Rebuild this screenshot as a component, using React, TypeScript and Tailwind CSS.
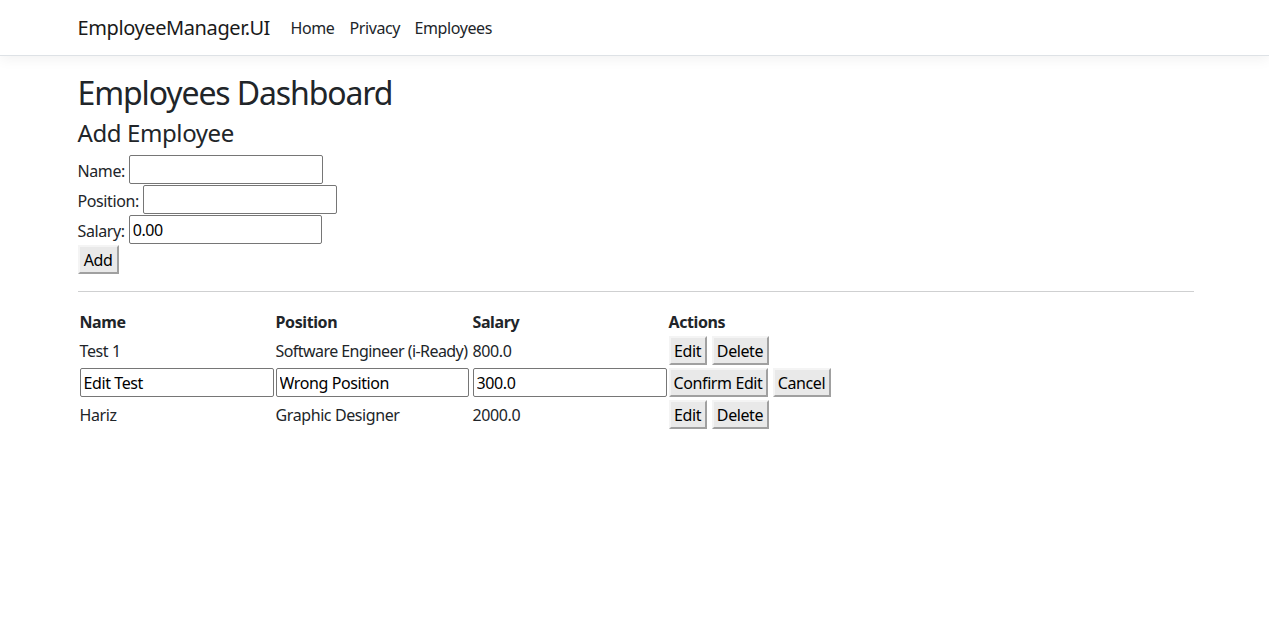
import React from "react";

const btn =
  "h-[29px] border-2 border-t-[#f4f4f4] border-l-[#f4f4f4] border-b-[#a0a0a0] border-r-[#a0a0a0] bg-[#e9e9e9] text-[16px] leading-none text-black whitespace-nowrap flex items-center justify-center";
const inp =
  "h-[29px] border border-[#767676] rounded-[2px] px-[3px] text-[16px] text-black bg-white outline-none tracking-[-0.025em]";

export default function App() {
  return (
    <div className="min-h-screen bg-white text-[#212529] font-['Noto_Sans',sans-serif] text-[16px] leading-[1.5] tracking-[-0.025em]">
      <header className="h-[56px] border-b border-[#dee2e6] bg-white shadow-[0_4px_12px_rgba(0,0,0,0.05)] pl-[2px]">
        <div className="mx-auto w-[1116px] h-full flex items-center">
          <div className="w-[213px] text-[20px] text-[#1a1a1a]">EmployeeManager.UI</div>
          <div className="w-[59px] text-[#212529]">Home</div>
          <div className="w-[65px] text-[#212529]">Privacy</div>
          <div className="text-[#212529]">Employees</div>
        </div>
      </header>
      <div className="pl-[2px]">
        <main className="mx-auto w-[1116px] pt-[17.5px]">
          <h1 className="text-[32px] leading-[38.4px] font-normal mb-[7px] tracking-[-0.035em]">Employees Dashboard</h1>
          <h4 className="text-[24px] leading-[28.8px] font-normal mb-[7.5px]">Add Employee</h4>
          <div className="flex flex-col">
            <div className="h-[30px] flex items-start gap-[4px]">
              <label className="pt-[2px] leading-[29px]">Name:</label>
              <input className={`${inp} w-[194px]`} />
            </div>
            <div className="h-[30px] flex items-start gap-[4px]">
              <label className="pt-[2px] leading-[29px]">Position:</label>
              <input className={`${inp} w-[194px]`} />
            </div>
            <div className="h-[30px] flex items-start gap-[4px]">
              <label className="pt-[2px] leading-[29px]">Salary:</label>
              <input className={`${inp} w-[193px]`} defaultValue="0.00" />
            </div>
            <div className="h-[30px] flex items-start">
              <button className={`${btn} w-[41px]`}>Add</button>
            </div>
          </div>
          <hr className="my-[16px] border-0 border-t border-[#cfd0d1]" />
          <div className="pl-[2px] pt-[2px] grid grid-cols-[196px_197px_196px_auto] gap-y-[2px]">
            <div className="h-[24px] font-bold">Name</div>
            <div className="h-[24px] font-bold">Position</div>
            <div className="h-[24px] font-bold">Salary</div>
            <div className="h-[24px] font-bold">Actions</div>

            <div className="h-[30px] flex items-center">Test 1</div>
            <div className="h-[30px] flex items-center whitespace-nowrap tracking-[-0.035em]">Software Engineer (i-Ready)</div>
            <div className="h-[30px] flex items-center">800.0</div>
            <div className="h-[30px] flex items-start gap-[5px]">
              <button className={`${btn} w-[38px]`}>Edit</button>
              <button className={`${btn} w-[57px]`}>Delete</button>
            </div>

            <div className="h-[30px] flex items-start">
              <input className={`${inp} w-[194px]`} defaultValue="Edit Test" />
            </div>
            <div className="h-[30px] flex items-start">
              <input className={`${inp} w-[193px]`} defaultValue="Wrong Position" />
            </div>
            <div className="h-[30px] flex items-start">
              <input className={`${inp} w-[194px]`} defaultValue="300.0" />
            </div>
            <div className="h-[30px] flex items-start gap-[5px]">
              <button className={`${btn} w-[99px]`}>Confirm Edit</button>
              <button className={`${btn} w-[58px]`}>Cancel</button>
            </div>

            <div className="h-[30px] flex items-center">Hariz</div>
            <div className="h-[30px] flex items-center">Graphic Designer</div>
            <div className="h-[30px] flex items-center">2000.0</div>
            <div className="h-[30px] flex items-start gap-[5px]">
              <button className={`${btn} w-[38px]`}>Edit</button>
              <button className={`${btn} w-[57px]`}>Delete</button>
            </div>
          </div>
        </main>
      </div>
    </div>
  );
}
